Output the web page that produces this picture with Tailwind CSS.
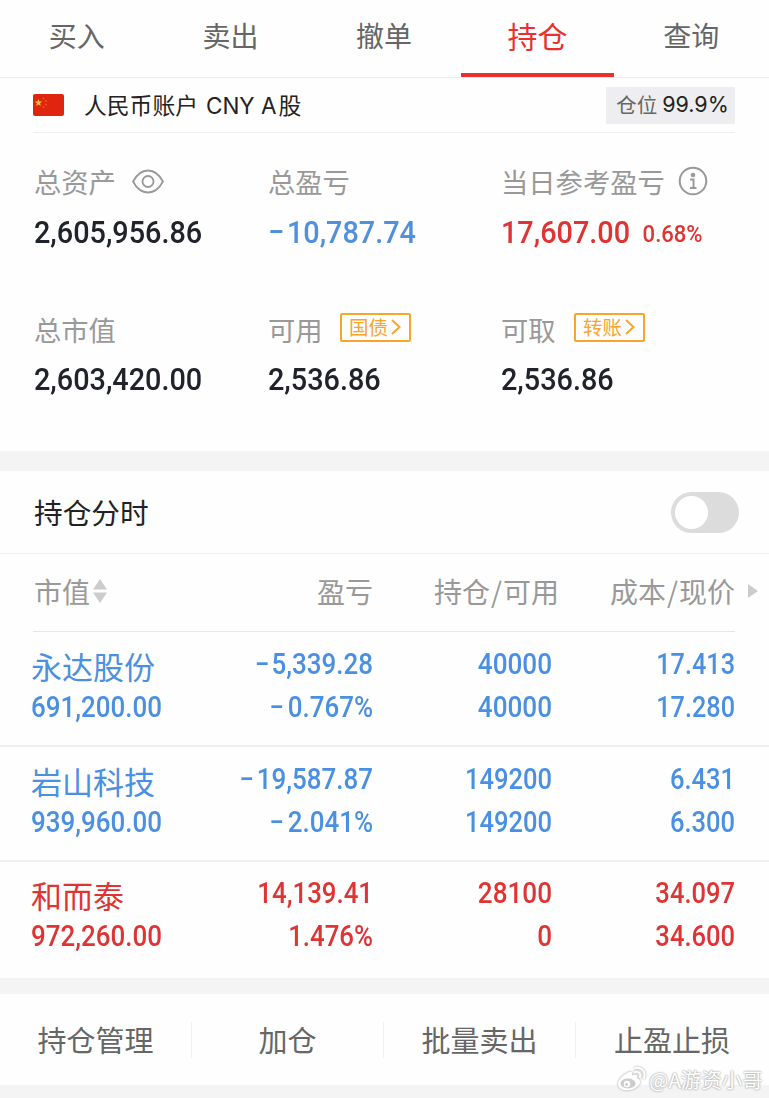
<!DOCTYPE html>
<html lang="zh-CN">

<head>
  <meta charset="UTF-8">
  <meta name="viewport" content="width=device-width, initial-scale=1.0">
  <title>持仓</title>
  <script src="https://cdn.jsdelivr.net/npm/@tailwindcss/browser@4"></script>
</head>

<body class="bg-[#fefefe] font-['Noto_Sans_CJK_SC',sans-serif] text-[#222]">
  <div class="relative w-[769px] h-[1098px] overflow-hidden whitespace-nowrap">

    <!-- tabs -->
    <nav class="grid grid-cols-5 h-[78px] pr-px border-b border-[#ededed] text-[28px] leading-[71px] text-center text-[#666]">
      <div>买入</div>
      <div>卖出</div>
      <div>撤单</div>
      <div class="h-[77px] border-b-4 border-[#e93030] text-[#e93030] text-[30px] leading-[70px]">持仓</div>
      <div>查询</div>
    </nav>

    <!-- account -->
    <div class="flex items-center h-[55px] ml-[33px] mr-[34px] border-b border-[#efefef]">
      <svg class="w-[31px] h-[22px]" viewBox="0 0 31 22">
        <rect width="31" height="22" rx="2" fill="#df2410" />
        <path d="M5.500 5l1 2.500 2.700.1-2.100 1.700.7 2.600-2.300-1.500-2.300 1.500.7-2.600-2.100-1.700 2.700-.1z" fill="#fbc02d" />
        <g fill="#e8601c">
          <circle cx="10.500" cy="4.500" r=".9" />
          <circle cx="13" cy="7" r=".9" />
          <circle cx="13" cy="10.500" r=".9" />
          <circle cx="10.500" cy="13" r=".9" />
        </g>
      </svg>
      <div class="ml-5 text-[22.800px] leading-[52px]">人民币账户<span class="ml-2 mr-[2px] font-['Inter'] text-[22.500px]">CNY A</span>股</div>
      <div class="ml-auto flex items-center justify-center gap-[5px] w-[129px] h-[37px] pl-[4px] bg-[#eeeef0] text-[20.500px] leading-[35px] text-[#666]">
        <span class="-mt-[2px]">仓位</span><span class="-mt-[2px] font-['Inter'] text-[#222] text-[21.500px]">99.9%</span>
      </div>
    </div>

    <!-- summary -->
    <div class="grid grid-cols-[234px_233px_1fr] pl-[34px] h-[318px] content-start text-[27.300px] text-[#999]">
      <div class="h-[147px] pt-[23px]">
        <div class="flex items-center h-[50px]">总资产
          <svg class="ml-4 w-8 h-[25px]" viewBox="0 0 32 25" fill="none" stroke="#999" stroke-width="1.800">
            <path d="M1 12.500C4.500 6 9.500 1.500 16 1.500S27.500 6 31 12.500C27.500 19 22.500 23.500 16 23.500S4.500 19 1 12.500z" />
            <circle cx="16" cy="12.500" r="5.500" />
          </svg>
        </div>
        <div class="pt-px font-['Roboto'] font-medium text-[32px] leading-[50px] text-[#20232a] origin-left scale-x-[.9]">2,605,956.86</div>
      </div>
      <div class="pt-[23px]">
        <div class="h-[50px] leading-[50px]">总盈亏</div>
        <div class="pt-px font-['Roboto'] font-medium text-[32px] leading-[50px] text-[#5090dc] origin-left scale-x-[.9]"><span class="mr-[3px]">−</span>10,787.74</div>
      </div>
      <div class="pt-[23px]">
        <div class="flex items-center h-[50px]">当日参考盈亏
          <svg class="ml-[13px] w-[30px] h-[30px]" viewBox="0 0 30 30" fill="none" stroke="#999" stroke-width="2">
            <circle cx="15" cy="15" r="13.300" />
            <circle cx="15" cy="9" r="1.300" fill="#999" />
            <path d="M12 13.500h3.500v8M12 22h6.500" />
          </svg>
        </div>
        <div class="flex pt-px font-['Roboto'] font-medium text-[32px] leading-[50px] text-[#df3434] origin-left scale-x-[.9]">17,607.00<span class="ml-[14px] pt-[2px] text-[24.500px]">0.68%</span></div>
      </div>
      <div class="pt-[24px]">
        <div class="h-[50px] leading-[50px]">总市值</div>
        <div class="font-['Roboto'] font-medium text-[32px] leading-[50px] text-[#20232a] origin-left scale-x-[.9]">2,603,420.00</div>
      </div>
      <div class="pt-[24px]">
        <div class="flex items-center h-[50px]">可用
          <div class="ml-[17px] -mt-1 flex items-center justify-center w-[71px] h-[29px] border-2 border-[#f9a52b] rounded-xs text-[19.500px] leading-none text-[#f9a52b]">国债
            <svg class="ml-[3px] w-[10px] h-4" viewBox="0 0 10 16" fill="none" stroke="#f9a52b" stroke-width="2"><path d="M1 1l7.500 7L1 15" /></svg>
          </div>
        </div>
        <div class="font-['Roboto'] font-medium text-[32px] leading-[50px] text-[#20232a] origin-left scale-x-[.9]">2,536.86</div>
      </div>
      <div class="pt-[24px]">
        <div class="flex items-center h-[50px]">可取
          <div class="ml-[18px] -mt-1 flex items-center justify-center w-[71px] h-[29px] border-2 border-[#f9a52b] rounded-xs text-[19.500px] leading-none text-[#f9a52b]">转账
            <svg class="ml-[3px] w-[10px] h-4" viewBox="0 0 10 16" fill="none" stroke="#f9a52b" stroke-width="2"><path d="M1 1l7.500 7L1 15" /></svg>
          </div>
        </div>
        <div class="font-['Roboto'] font-medium text-[32px] leading-[50px] text-[#20232a] origin-left scale-x-[.9]">2,536.86</div>
      </div>
    </div>

    <div class="h-5 bg-[#f4f4f4]"></div>

    <!-- intraday switch -->
    <div class="flex items-center justify-between h-[83px] pl-[34px] pr-[30px] border-b border-[#efefef] text-[28.700px]">
      <div class="leading-[80px]">持仓分时</div>
      <div class="w-[68px] h-[41px] rounded-full bg-[#dcdcdc] p-1">
        <div class="size-[33px] rounded-full bg-white"></div>
      </div>
    </div>

    <!-- holdings -->
    <div class="relative grid grid-cols-[170px_169px_186px_176px] items-center h-[77px] pb-[3px] ml-[34px] text-[28px] text-[#999] text-right">
      <div class="flex items-center gap-[3px]">市值
        <svg class="w-[14px] h-6" viewBox="0 0 14 24" fill="#ccc"><path d="M7 0l7 10.500H0zM7 24l7-10.500H0z" /></svg>
      </div>
      <div>盈亏</div>
      <div>持仓<span class="mx-px">/</span>可用</div>
      <div>成本<span class="mx-px">/</span>现价</div>
      <svg class="absolute left-[714px] top-[30px] w-[10px] h-[14px]" viewBox="0 0 10 14" fill="#ccc"><path d="M0 0l10 7-10 7z" /></svg>
    </div>
    <div class="h-px ml-[33px] mr-[34px] bg-[#e6e6e6]"></div>

    <div class="grid grid-cols-[172px_170px_179px_183px] h-[115px] pt-[11px] pl-[31px] border-b-2 border-[#f0f0f0] text-[#4a90e2] font-['Roboto'] font-medium text-[29px] leading-[43px] text-right">
      <div class="text-left">
        <div class="h-[43px] pt-px font-['Noto_Sans_CJK_SC'] font-normal text-[31px]">永达股份</div>
        <div class="origin-left scale-x-[.895]">691,200.00</div>
      </div>
      <div class="origin-right scale-x-[.895]"><span class="mr-[2px]">−</span>5,339.28<br><span class="mr-[4px]">−</span>0.767%</div>
      <div class="origin-right scale-x-[.9]">40000<br>40000</div>
      <div class="origin-right scale-x-[.87]">17.413<br>17.280</div>
    </div>
    <div class="grid grid-cols-[172px_170px_179px_183px] h-[115px] pt-[11px] pl-[31px] border-b-2 border-[#f0f0f0] text-[#4a90e2] font-['Roboto'] font-medium text-[29px] leading-[43px] text-right">
      <div class="text-left">
        <div class="h-[43px] pt-px font-['Noto_Sans_CJK_SC'] font-normal text-[31px]">岩山科技</div>
        <div class="origin-left scale-x-[.895]">939,960.00</div>
      </div>
      <div class="origin-right scale-x-[.895]"><span class="mr-[3px]">−</span>19,587.87<br><span class="mr-[4px]">−</span>2.041%</div>
      <div class="origin-right scale-x-[.88]">149200<br>149200</div>
      <div class="origin-right scale-x-[.88]">6.431<br>6.300</div>
    </div>
    <div class="grid grid-cols-[172px_170px_179px_183px] h-[116px] pt-[10px] pl-[31px] text-[#df3434] font-['Roboto'] font-medium text-[29px] leading-[43px] text-right">
      <div class="text-left">
        <div class="h-[43px] pt-px font-['Noto_Sans_CJK_SC'] font-normal text-[31px]">和而泰</div>
        <div class="origin-left scale-x-[.895]">972,260.00</div>
      </div>
      <div class="origin-right scale-x-[.89]">14,139.41<br>1.476%</div>
      <div class="origin-right scale-x-[.9]">28100<br>0</div>
      <div class="origin-right scale-x-[.88]">34.097<br>34.600</div>
    </div>

    <div class="h-4 bg-[#f4f4f4]"></div>

    <!-- bottom actions -->
    <div class="grid grid-cols-4 items-center h-[91px] pr-px text-[29px] leading-[34px] text-center text-[#666]">
      <div class="h-9 border-r border-[#f0f0f0]">持仓管理</div>
      <div class="h-9 border-r border-[#f0f0f0]">加仓</div>
      <div class="h-9 border-r border-[#f0f0f0]">批量卖出</div>
      <div class="h-9">止盈止损</div>
    </div>
    <div class="h-[13px] bg-[#f4f4f4]"></div>

    <!-- watermark -->
    <div class="absolute left-[616px] top-[1063px] flex items-center h-8 text-[20.500px] text-white [text-shadow:0_0_2px_#999,0_0_2px_#bbb]">
      <svg class="mr-[3px] w-[30px] h-[26px] drop-shadow-[0_0_1px_#999]" viewBox="0 0 30 26" fill="none">
        <path d="M11 7c3-2 6-2 5 2 4-1 6 0 5 3 4 2 4 5 1 8-5 6-20 6-20-2 0-4 5-9 9-11z" fill="#fff" />
        <ellipse cx="12" cy="17.500" rx="7.500" ry="5" fill="#ccc" />
        <circle cx="11" cy="18" r="3.200" fill="#fff" />
        <circle cx="10.500" cy="18.500" r="1.200" fill="#bbb" />
        <path d="M19 6c4-1 6 2 5 5M19 2c7-1.500 11 4 9 10" stroke="#fff" stroke-width="2" stroke-linecap="round" />
      </svg>
      @A游资小哥
    </div>
  </div>
</body>

</html>
